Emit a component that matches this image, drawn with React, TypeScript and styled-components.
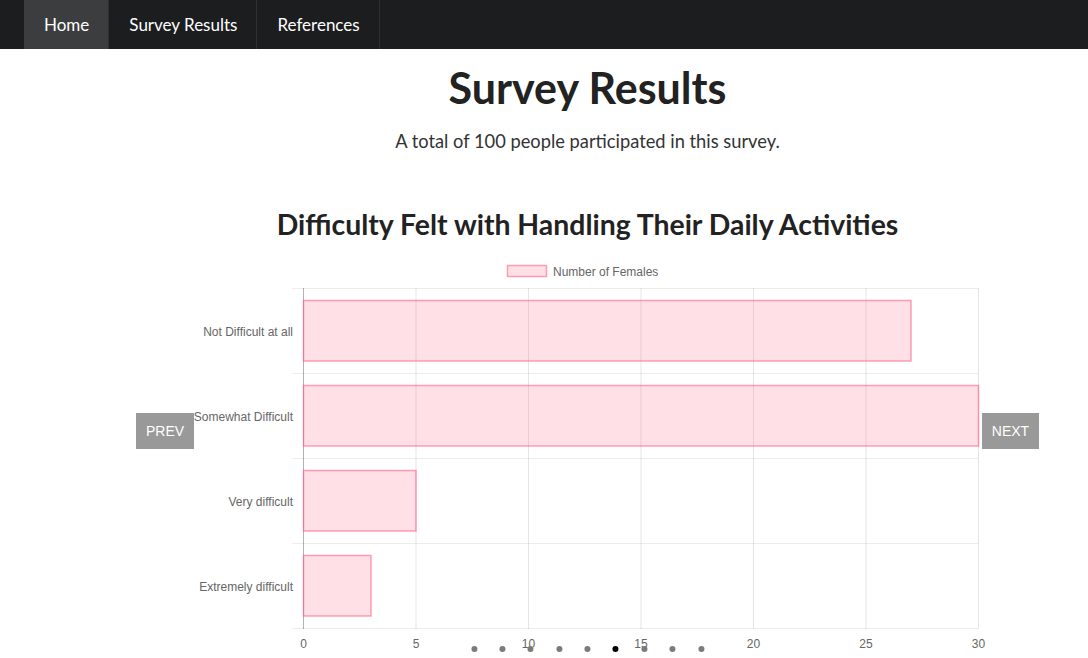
import React from "react";
import styled, { createGlobalStyle } from "styled-components";

const GlobalStyle = createGlobalStyle`
  html, body { margin: 0; padding: 0; background: #fff; overflow: hidden; }
  body { font-family: Lato, "Open Sans", sans-serif; color: #222; }
  * { box-sizing: border-box; }
`;

const NavBar = styled.nav`
  height: 49px;
  background: #1c1d1f;
  display: flex;
  padding-left: 24px;
`;

const NavItem = styled.a<{ $active?: boolean }>`
  display: flex;
  align-items: center;
  padding: 0 19px 0 20px;
  height: 100%;
  font-size: 17px;
  color: #fff;
  text-decoration: none;
  background: ${(p) => (p.$active ? "#3c3d3f" : "transparent")};
  border-right: 1px solid #2f3032;
`;

const Main = styled.main`
  padding-left: 87px;
  display: flex;
  flex-direction: column;
  align-items: center;
`;

const Title = styled.h1`
  margin: 14px 0 0;
  font-size: 43px;
  line-height: 50px;
  font-weight: 700;
  color: #222;
`;

const Subtitle = styled.p`
  margin: 15px 0 0;
  font-size: 18.3px;
  line-height: 27px;
  color: #333;
`;

const ChartTitle = styled.h2`
  margin: 52px 0 0;
  font-size: 28.4px;
  line-height: 34px;
  font-weight: 700;
  color: #222;
`;

const Carousel = styled.div`
  position: relative;
  width: 903px;
  height: 400px;
  margin-top: 17px;
`;

const NavButton = styled.button<{ $side: "left" | "right" }>`
  position: absolute;
  top: 155px;
  ${(p) => (p.$side === "left" ? "left: 0; width: 58px;" : "right: 0; width: 57px;")}
  height: 36px;
  border: none;
  background: #999;
  color: #fff;
  font-family: "Liberation Sans", Arial, sans-serif;
  font-size: 14px;
  padding: 0;
  cursor: pointer;
`;

const Dots = styled.div`
  position: absolute;
  top: 388px;
  left: 50%;
  transform: translateX(-50%);
  display: flex;
  gap: 22.4px;
`;

const Dot = styled.span<{ $active?: boolean }>`
  width: 6px;
  height: 6px;
  border-radius: 50%;
  background: ${(p) => (p.$active ? "#000" : "#7b7b7b")};
`;

const ChartSvg = styled.svg`
  display: block;
  font-family: "Liberation Sans", Arial, sans-serif;
`;

const data = [
  { label: "Not Difficult at all", value: 27 },
  { label: "Somewhat Difficult", value: 30 },
  { label: "Very difficult", value: 5 },
  { label: "Extremely difficult", value: 3 },
];

const X0 = 167;
const UNIT = 22.5;
const TOP = 30;
const BAND = 85;

function Chart() {
  const ticks = [0, 5, 10, 15, 20, 25, 30];
  return (
    <ChartSvg width={903} height={400} viewBox="0 0 903 400">
      <rect x={371.5} y={7.5} width={39} height={11} fill="rgba(255,99,132,0.2)" stroke="rgba(255,99,132,0.6)" strokeWidth={1.5} />
      <text x={417} y={17.5} fontSize={12} fill="#666">Number of Females</text>
      {[0, 1, 2, 3, 4].map((i) => (
        <line key={"h" + i} x1={156} x2={842} y1={TOP + i * BAND + 0.5} y2={TOP + i * BAND + 0.5} stroke="rgba(0,0,0,0.07)" strokeWidth={1} />
      ))}
      {ticks.map((t, i) => (
        <line key={"v" + t} x1={X0 + t * UNIT + 0.5} x2={X0 + t * UNIT + 0.5} y1={TOP} y2={TOP + 4 * BAND + 1} stroke={i === 0 ? "rgba(0,0,0,0.3)" : "rgba(0,0,0,0.1)"} strokeWidth={1} />
      ))}
      {data.map((d, i) => (
        <rect key={d.label} x={X0 + 0.5} y={TOP + i * BAND + 12.5} width={d.value * UNIT} height={60.5} fill="rgba(255,99,132,0.2)" stroke="rgba(255,99,132,0.6)" strokeWidth={1.5} />
      ))}
      {data.map((d, i) => (
        <text key={"l" + d.label} x={157} y={TOP + i * BAND + BAND / 2 + 5} fontSize={12} fill="#666" textAnchor="end">{d.label}</text>
      ))}
      {ticks.map((t) => (
        <text key={"t" + t} x={X0 + t * UNIT + 0.5} y={390} fontSize={12} fill="#666" textAnchor="middle">{t}</text>
      ))}
    </ChartSvg>
  );
}

export default function App() {
  return (
    <>
      <GlobalStyle />
      <NavBar>
        <NavItem href="#" $active>Home</NavItem>
        <NavItem href="#">Survey Results</NavItem>
        <NavItem href="#">References</NavItem>
      </NavBar>
      <Main>
        <Title>Survey Results</Title>
        <Subtitle>A total of 100 people participated in this survey.</Subtitle>
        <ChartTitle>Difficulty Felt with Handling Their Daily Activities</ChartTitle>
        <Carousel>
          <Chart />
          <NavButton $side="left">PREV</NavButton>
          <NavButton $side="right">NEXT</NavButton>
          <Dots>
            {Array.from({ length: 9 }).map((_, i) => (
              <Dot key={i} $active={i === 5} />
            ))}
          </Dots>
        </Carousel>
      </Main>
    </>
  );
}
